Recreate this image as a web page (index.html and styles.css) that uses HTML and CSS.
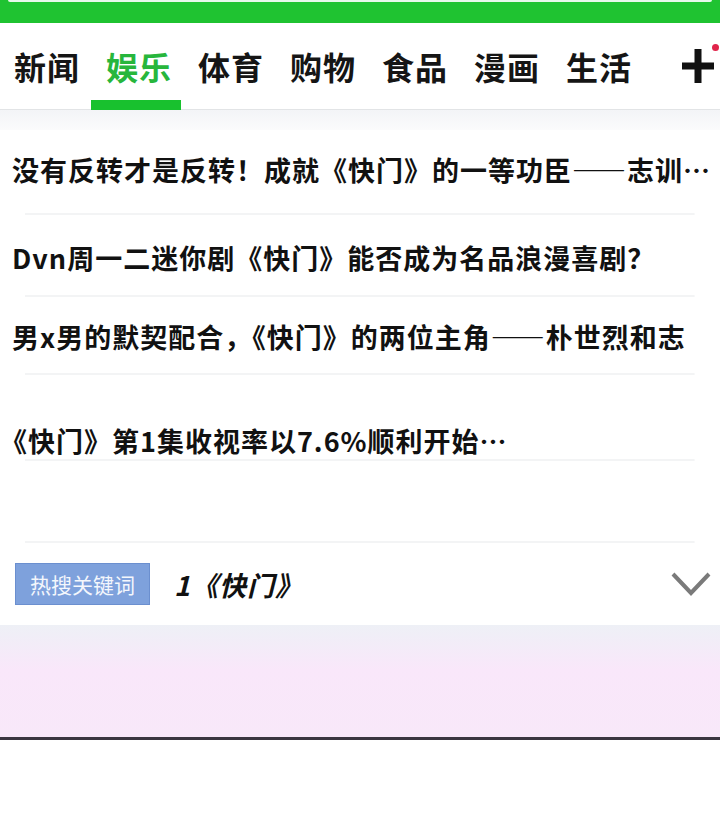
FILE: index.html
```html
<!DOCTYPE html>
<html lang="zh-CN">
  <head>
    <meta charset="UTF-8" />
    <meta name="viewport" content="width=device-width, initial-scale=1.0" />
    <title>娱乐</title>
    <link rel="stylesheet" href="styles.css">
  </head>
  <body>
    <div class="topbar">
      <div class="search-edge"></div>
    </div>

    <nav class="tabs">
      <a class="tab">新闻</a>
      <a class="tab active">娱乐</a>
      <a class="tab">体育</a>
      <a class="tab">购物</a>
      <a class="tab">食品</a>
      <a class="tab">漫画</a>
      <a class="tab">生活</a>
      <span class="more">
        <svg width="32" height="34" viewBox="0 0 32 34">
          <path d="M16 0 V34 M0 17 H32" stroke="#111" stroke-width="7" fill="none" />
        </svg>
        <i class="dot"></i>
      </span>
    </nav>

    <div class="band"></div>

    <ul class="news">
      <li class="item item-1">没有反转才是反转！成就《快门》的一等功臣——志训…</li>
      <li class="item item-2">Dvn周一二迷你剧《快门》能否成为名品浪漫喜剧？</li>
      <li class="item item-3">男x男的默契配合，《快门》的两位主角——朴世烈和志</li>
      <li class="item item-4">《快门》第1集收视率以7.6%顺利开始…</li>
      <li class="item item-5"></li>
    </ul>

    <div class="hot">
      <span class="hot-label">热搜关键词</span>
      <span class="hot-word">1《快门》</span>
      <svg class="chevron" width="40" height="26" viewBox="0 0 40 26">
        <path d="M2 3 L20 22 L38 3" stroke="#7a7a7a" stroke-width="4" fill="none" />
      </svg>
    </div>

    <div class="footer-fade"></div>
    <div class="footer-line"></div>
  </body>
</html>
```

FILE: styles.css
```css
/* Page */
body {
  margin: 0;
  background: #fff;
  font-family: "Noto Sans CJK SC", "Noto Sans", sans-serif;
  color: #111;
}

/* Green top bar with bottom of search box */
.topbar {
  height: 23px;
  background-color: #1fc331;
  padding: 0 8px;
}

.search-edge {
  height: 2px;
  background: #e8f8ea;
  border-radius: 0 0 4px 4px;
}

/* Channel tabs */
.tabs {
  display: flex;
  align-items: center;
  height: 87px;
  padding-left: 14px;
  background: #fff;
  border-bottom: 1px solid #e2e4e6;
  box-sizing: border-box;
}

.tab {
  position: relative;
  font-size: 32px;
  font-weight: bold;
  line-height: 40px;
  margin-right: 26px;
  color: #151515;
  letter-spacing: 1px;
}

.tab.active {
  color: #27b63c;
}

.tab.active::after {
  content: "";
  position: absolute;
  left: -15px;
  right: -9px;
  top: 54px;
  height: 10px;
  background: #18c12e;
}

.more {
  position: relative;
  margin-left: auto;
  margin-right: 6px;
  display: flex;
}

.dot {
  position: absolute;
  right: -5px;
  top: -5px;
  width: 7px;
  height: 7px;
  border-radius: 50%;
  background: #e0244a;
}

/* Grey band under tabs */
.band {
  height: 20px;
  background: linear-gradient(#f3f4f7, #fbfbfc);
}

/* News list */
.news {
  list-style: none;
  margin: 0;
  padding: 0;
}

.item {
  font-size: 27px;
  font-weight: bold;
  letter-spacing: 1px;
  line-height: 36px;
  padding-left: 12px;
  white-space: nowrap;
  overflow: hidden;
  box-sizing: border-box;
  /* faint inset divider */
  background: linear-gradient(#f3f4f5, #f3f4f5) no-repeat center bottom / 93% 2px;
}

.item-1 { height: 85px; padding-top: 22px; }
.item-2 { height: 82px; padding-top: 25px; }
.item-3 { height: 78px; padding-top: 22px; }
.item-4 { height: 86px; padding-top: 48px; padding-left: 0; }
.item-5 { height: 82px; }

/* Hot keywords */
.hot {
  display: flex;
  align-items: center;
  height: 82px;
  padding: 0 9px 0 15px;
}

.hot-label {
  background: #7ea1dc;
  border: 1px solid #6b8fcf;
  color: #f4f7fc;
  font-size: 21px;
  line-height: 40px;
  padding: 0 14px;
}

.hot-word {
  margin-left: 24px;
  font-size: 27px;
  font-weight: bold;
  font-style: italic;
  letter-spacing: 1px;
}

.chevron {
  margin-left: auto;
}

/* Bottom fade and line */
.footer-fade {
  height: 112px;
  background: linear-gradient(#eef0f6, #f9e7fa 40%, #f8e8f9);
}

.footer-line {
  height: 3px;
  background: #3a3540;
}
```
